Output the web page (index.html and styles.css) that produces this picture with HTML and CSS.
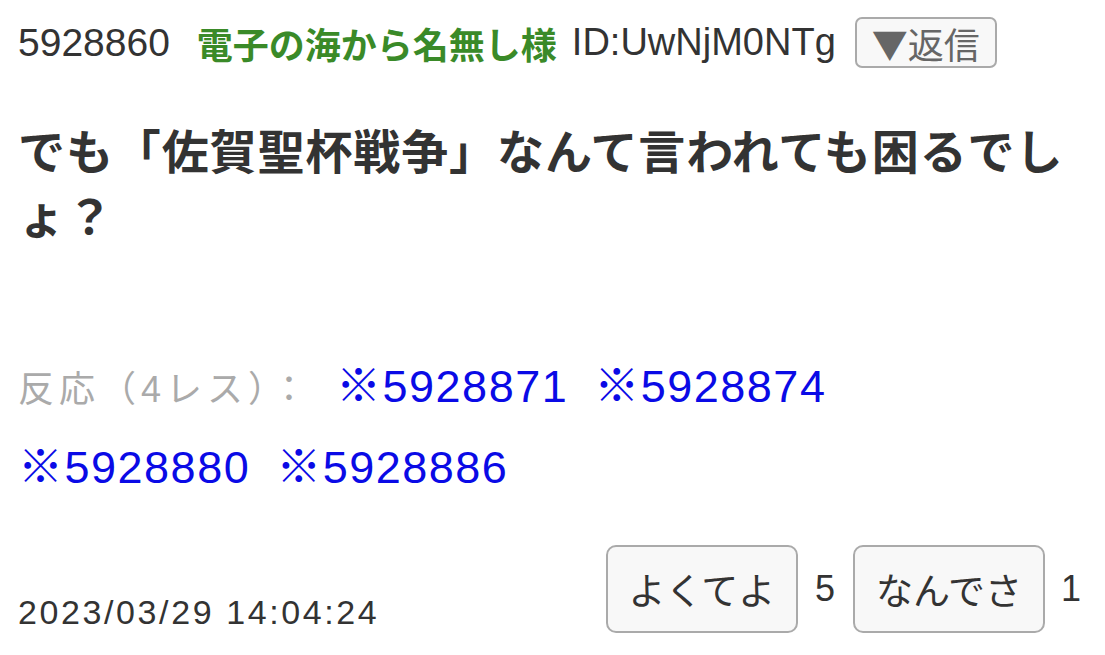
FILE: index.html
```html
<!DOCTYPE html>
<html lang="ja">
<head>
    <meta charset="UTF-8">
    <meta name="viewport" content="width=device-width, initial-scale=1.0">
    <title>5928860</title>
    <link rel="stylesheet" href="styles.css">
</head>
<body>
    <div class="res">
        <!-- header: number, name, id, reply -->
        <div class="res-head">
            <span class="res-no">5928860</span>
            <span class="res-name">電子の海から名無し様</span>
            <span class="res-id">ID:UwNjM0NTg</span>
            <button class="reply-btn"><span class="tri">▼</span>返信</button>
        </div>

        <div class="res-body">でも「佐賀聖杯戦争」なんて言われても困るでしょ？</div>

        <!-- reactions -->
        <div class="res-refs">
            <span class="refs-label">反応（4レス）：</span>
            <a href="#" class="ref">※5928871</a>
            <a href="#" class="ref">※5928874</a>
            <a href="#" class="ref">※5928880</a>
            <a href="#" class="ref">※5928886</a>
        </div>

        <div class="res-foot">
            <span class="res-date">2023/03/29 14:04:24</span>
            <div class="votes">
                <button class="vote-btn">よくてよ</button>
                <span class="vote-count">5</span>
                <button class="vote-btn">なんでさ</button>
                <span class="vote-count">1</span>
            </div>
        </div>
    </div>
</body>
</html>
```

FILE: styles.css
```css
body {
    margin: 0;
    background: #fff;
    color: #333;
    font-family: "Liberation Sans", "Noto Sans CJK JP", sans-serif;
}
.res {
    padding: 0 18px;
}
.res-head {
    display: flex;
    align-items: center;
    height: 85px;
    white-space: nowrap;
}
.res-no {
    font-size: 39px;
    margin-right: 27px;
}
.res-name {
    font-size: 36px;
    color: #3a8a28;
    font-weight: bold;
    margin-right: 15px;
}
.res-id {
    font-size: 38px;
    margin-right: 19px;
}
.reply-btn {
    font-family: "Noto Sans CJK JP", sans-serif;
    font-size: 36px;
    color: #666;
    background: #f8f8f8;
    border: 2px solid #aaa;
    border-radius: 7px;
    width: 142px;
    height: 51px;
    padding: 0;
    line-height: 1;
}
.tri {
    color: #666;
}
.res-body {
    font-size: 47px;
    font-weight: bold;
    letter-spacing: 0.9px;
    line-height: 65px;
    padding-top: 35px;
    margin-bottom: 98px;
}
.res-refs {
    display: flex;
    flex-wrap: wrap;
    align-items: baseline;
    line-height: 78px;
    padding-right: 30px;
}
.refs-label {
    font-size: 36px;
    color: #aaa;
    letter-spacing: 5px;
    margin-right: 24px;
}
.ref {
    font-size: 45px;
    letter-spacing: 1.5px;
    color: #0a0ae6;
    text-decoration: none;
    margin-right: 26px;
}
.res-foot {
    display: flex;
    justify-content: space-between;
    align-items: flex-end;
    margin-top: 38px;
}
.res-date {
    font-size: 34px;
    letter-spacing: 2.6px;
    line-height: 40px;
    margin-bottom: 1px;
}
.votes {
    display: flex;
    align-items: center;
    font-size: 36px;
}
.vote-btn {
    font-family: "Noto Sans CJK JP", sans-serif;
    font-size: 37px;
    color: #333;
    background: #f8f8f8;
    border: 2px solid #aaa;
    border-radius: 10px;
    width: 192px;
    height: 88px;
    padding: 0;
}
.vote-count {
    margin: 0 18px 0 17px;
}
.vote-count:last-child {
    margin: 0 6px 0 16px;
}
```
